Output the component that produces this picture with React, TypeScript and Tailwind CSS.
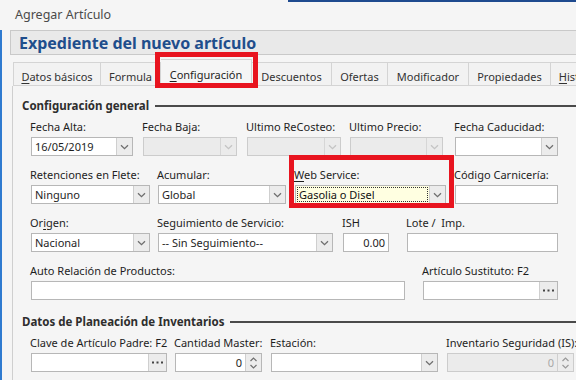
import React from "react";

const FONT = { fontFamily: '"Noto Sans", "Open Sans", sans-serif' };

function Chevron({ light = false }: { light?: boolean }) {
  return (
    <svg width="9" height="6" viewBox="0 0 9 6">
      <path d="M1 1.2 L4.5 4.6 L8 1.2" fill="none" stroke={light ? "#c4c4c4" : "#6e6e6e"} strokeWidth="1.3" />
    </svg>
  );
}

function Spin({ light = false }: { light?: boolean }) {
  const c = light ? "#9a9a9a" : "#6e6e6e";
  return (
    <svg width="9" height="14" viewBox="0 0 9 14">
      <path d="M1.5 5 L4.5 2 L7.5 5" fill="none" stroke={c} strokeWidth="1.2" />
      <path d="M1.5 9 L4.5 12 L7.5 9" fill="none" stroke={c} strokeWidth="1.2" />
    </svg>
  );
}

function Dots() {
  return (
    <svg width="11" height="3" viewBox="0 0 11 3">
      <rect x="0" y="0.5" width="2" height="2" fill="#444" />
      <rect x="4.5" y="0.5" width="2" height="2" fill="#444" />
      <rect x="9" y="0.5" width="2" height="2" fill="#444" />
    </svg>
  );
}

type Kind = "text" | "combo" | "dots" | "spin";

function Field({
  label,
  w,
  ml = 0,
  kind = "text",
  value = "",
  disabled = false,
  right = false,
  u,
}: {
  label: string;
  w: number;
  ml?: number;
  kind?: Kind;
  value?: string;
  disabled?: boolean;
  right?: boolean;
  u?: number;
}) {
  const lbl =
    u === undefined ? (
      label
    ) : (
      <>
        {label.slice(0, u)}
        <span className="underline underline-offset-2">{label[u]}</span>
        {label.slice(u + 1)}
      </>
    );
  return (
    <div className="relative flex flex-col shrink-0" style={{ width: w, marginLeft: ml }}>
      <div className="h-[16px] leading-[16px] whitespace-pre text-[#1e1e1e] -ml-px">{lbl}</div>
      <div
        className={`mt-[2px] h-[19px] flex border ${
          disabled ? "bg-[#ebebeb] border-[#cccccc]" : "bg-white border-[#b7b7b7]"
        }`}
      >
        <div
          className={`flex-1 min-w-0 px-[3px] leading-[17px] whitespace-nowrap overflow-hidden ${
            right ? "text-right" : ""
          } ${disabled ? "text-[#a8a8a8]" : "text-[#1e1e1e]"}`}
        >
          {value}
        </div>
        {kind === "combo" && (
          <div
            className={`w-[16px] flex items-center justify-center border-l ${
              disabled ? "border-[#d6d6d6] bg-[#ebebeb]" : "border-[#cfcfcf] bg-[#ececec]"
            }`}
          >
            <Chevron light={disabled} />
          </div>
        )}
        {kind === "dots" && (
          <div className="w-[18px] flex items-center justify-center border-l border-[#cfcfcf] bg-[#ececec]">
            <Dots />
          </div>
        )}
        {kind === "spin" && (
          <div className="w-[16px] flex items-center justify-center border-l border-[#cfcfcf] bg-[#ececec]">
            <Spin light={disabled} />
          </div>
        )}
      </div>
    </div>
  );
}

function Legend({ title }: { title: string }) {
  return (
    <div className="flex items-center h-[16px] pl-[9px]">
      <span className="font-bold text-[#2e2e2e] whitespace-nowrap leading-[16px] text-[11.5px]">{title}</span>
      <div className="ml-[6px] flex-1 h-[2px] bg-[#4a4a4a]" />
    </div>
  );
}

const tabs = [
  { t: "Datos básicos", w: 88, u: 0 },
  { t: "Formula", w: 60 },
  { t: "Configuración", w: 91, u: 0, sel: true },
  { t: "Descuentos", w: 80 },
  { t: "Ofertas", w: 56 },
  { t: "Modificador", w: 81 },
  { t: "Propiedades", w: 82 },
  { t: "Historial", w: 60, u: 0 },
];

export default function App() {
  return (
    <div className="relative w-[576px] h-[380px] overflow-hidden bg-[#f5f5f5] text-[11px]" style={FONT}>
      <div className="absolute top-0 left-[288px] right-0 h-[2px] bg-[#1e4a8f]" />
      <div className="h-[30px] pl-[15px] flex items-center text-[12.5px] text-[#4a4a4a]">Agregar Artículo</div>
      <div className="border-l-2 border-[#2f7bd0] pl-[8px] h-[350px]">
        <div className="h-[25px] border border-r-0 border-[#c9c9c9] bg-[#e9e9e9] flex items-center pl-[8px]">
          <span className="text-[16px] font-bold text-[#1f4e8c] leading-none">Expediente del nuevo artículo</span>
        </div>
        <div className="flex items-end h-[31px] pl-[3px] whitespace-nowrap">
          {tabs.map((tab) => (
            <div
              key={tab.t}
              className={`relative shrink-0 flex items-center justify-center border-t border-r ${
                tab.sel
                  ? "h-[27px] bg-[#f5f5f5] border-[#d4d4d4] text-[#1e1e1e] pt-[5px]"
                  : "h-[24px] bg-[#f2f2f2] border-[#d4d4d4] border-b text-[#333] pt-[6px]"
              } ${tab.t === "Datos básicos" ? "border-l" : ""}`}
              style={{ width: tab.w }}
            >
              {tab.u === 0 ? (
                <>
                  <span className="underline underline-offset-2">{tab.t[0]}</span>
                  {tab.t.slice(1)}
                </>
              ) : (
                tab.t
              )}
              {tab.sel && (
                <div className="absolute left-[-6px] right-[-7px] top-[-8px] bottom-[-2px] border-[5px] border-[#e8141f] z-10" />
              )}
            </div>
          ))}
        </div>
        <div className="ml-[2px] border-l border-[#cfcfcf] h-full pt-[12px]">
          <Legend title="Configuración general" />
          <div className="pl-[18px] pt-[5px] flex flex-col gap-[11px]">
            <div className="flex">
              <Field label="Fecha Alta:" w={102} kind="combo" value="16/05/2019" />
              <Field label="Fecha Baja:" w={94} ml={10} kind="combo" disabled />
              <Field label="Ultimo ReCosteo:" w={94} ml={10} kind="combo" disabled />
              <Field label="Ultimo Precio:" w={93} ml={9} kind="combo" disabled />
              <Field label="Fecha Caducidad:" w={103} ml={12} kind="combo" />
            </div>
            <div className="flex">
              <Field label="Retenciones en Flete:" w={119} kind="combo" value="Ninguno" />
              <Field label="Acumular:" w={128} ml={8} kind="combo" value="Global" />
              <div className="relative shrink-0 ml-[9px]">
                <div className="flex flex-col w-[151px]">
                  <div className="h-[16px] leading-[16px] whitespace-nowrap text-[#1e1e1e] -ml-px">
                    <span className="underline underline-offset-2">W</span>eb Service:
                  </div>
                  <div className="mt-[2px] h-[19px] flex border border-[#b7b7b7] bg-[#ffffe1]">
                    <div className="flex-1 p-[1px]">
                      <div className="h-full border border-dotted border-[#333] leading-[13px] px-[1px] text-[#111]">
                        Gasolia o Disel
                      </div>
                    </div>
                    <div className="w-[16px] flex items-center justify-center border-l border-[#cfcfcf] bg-[#ececec]">
                      <Chevron />
                    </div>
                  </div>
                </div>
                <div className="absolute left-[-6px] right-[-8px] top-[-12px] bottom-[-4px] border-[5px] border-[#e8141f]" />
              </div>
              <Field label="Código Carnicería:" w={103} ml={9} />
            </div>
            <div className="flex">
              <Field label="Origen:" w={119} kind="combo" value="Nacional" u={2} />
              <Field label="Seguimiento de Servicio:" w={175} ml={8} kind="combo" value="-- Sin Seguimiento--" />
              <Field label="ISH" w={46} ml={10} value="0.00" right />
              <Field label="Lote /  Imp." w={151} ml={18} />
            </div>
            <div className="flex">
              <Field label="Auto Relación de Productos:" w={374} />
              <Field label="Artículo Sustituto: F2" w={135} ml={18} kind="dots" />
            </div>
          </div>
          <div className="mt-[14px]">
            <Legend title="Datos de Planeación de Inventarios" />
          </div>
          <div className="pl-[18px] pt-[5px] flex">
            <Field label="Clave de Artículo Padre: F2" w={136} kind="dots" />
            <Field label="Cantidad Master:" w={87} ml={8} kind="spin" value="0" right />
            <Field label="Estación:" w={167} ml={9} kind="combo" />
            <Field label="Inventario Seguridad (IS):" w={127} ml={9} kind="spin" value="0" right disabled />
          </div>
        </div>
      </div>
    </div>
  );
}
